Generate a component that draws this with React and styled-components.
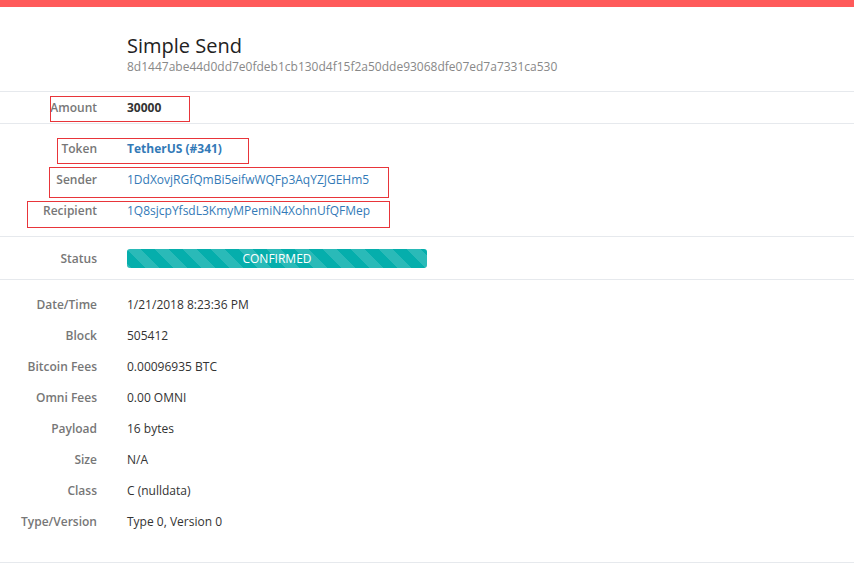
import React from "react";
import styled, { createGlobalStyle } from "styled-components";

const GlobalStyle = createGlobalStyle`
  body {
    margin: 0;
    background: #fff;
    font-family: "Open Sans", "Liberation Sans", sans-serif;
    font-size: 12px;
    color: #333;
  }
`;

const TOPBAR = styled.div`
  height: 7px;
  background: #ff5a5a;
`;

const HEADER = styled.div`
  padding: 25px 0 16px 127px;
  border-bottom: 1px solid #e6e9ed;
`;

const TITLE = styled.h1`
  margin: 0;
  font-size: 20px;
  font-weight: 400;
  line-height: 27px;
  color: #222;
`;

const HASH = styled.div`
  font-size: 12px;
  line-height: 16px;
  color: #888;
`;

const SECTION = styled.div`
  padding: ${(p) => p.pad || "0"};
  border-bottom: 1px solid #e6e9ed;
`;

const ROW = styled.div`
  position: relative;
  display: grid;
  grid-template-columns: 97px 1fr;
  column-gap: 30px;
  height: ${(p) => p.h || 31}px;
  align-items: center;
`;

const LABEL = styled.div`
  text-align: right;
  font-weight: 600;
  color: #777;
  white-space: nowrap;
`;

const VALUE = styled.div`
  color: ${(p) => (p.link ? "#337ab7" : "#333")};
  font-weight: ${(p) => (p.bold ? 700 : 400)};
  white-space: nowrap;
`;

const MARK = styled.div`
  position: absolute;
  border: 1px solid #e8353a;
  box-sizing: border-box;
  pointer-events: none;
`;

const STATUSBAR = styled.div`
  width: 300px;
  height: 19px;
  border-radius: 3px;
  background-color: #05aeac;
  background-image: linear-gradient(
    45deg,
    rgba(255, 255, 255, 0.15) 25%,
    transparent 25%,
    transparent 50%,
    rgba(255, 255, 255, 0.15) 50%,
    rgba(255, 255, 255, 0.15) 75%,
    transparent 75%,
    transparent
  );
  background-size: 28px 28px;
  color: #fff;
  text-align: center;
  line-height: 19px;
  font-size: 12px;
`;

const details = [
  ["Date/Time", "1/21/2018 8:23:36 PM"],
  ["Block", "505412"],
  ["Bitcoin Fees", "0.00096935 BTC"],
  ["Omni Fees", "0.00 OMNI"],
  ["Payload", "16 bytes"],
  ["Size", "N/A"],
  ["Class", "C (nulldata)"],
  ["Type/Version", "Type 0, Version 0"],
];

export default function App() {
  return (
    <>
      <GlobalStyle />
      <TOPBAR />
      <HEADER>
        <TITLE>Simple Send</TITLE>
        <HASH>8d1447abe44d0dd7e0fdeb1cb130d4f15f2a50dde93068dfe07ed7a7331ca530</HASH>
      </HEADER>
      <SECTION>
        <ROW>
          <LABEL>Amount</LABEL>
          <VALUE bold>30000</VALUE>
          <MARK style={{ left: 50, top: 4, width: 140, height: 26 }} />
        </ROW>
      </SECTION>
      <SECTION pad="9px 0 10px">
        <ROW>
          <LABEL>Token</LABEL>
          <VALUE link bold>TetherUS (#341)</VALUE>
          <MARK style={{ left: 57, top: 5, width: 192, height: 26 }} />
        </ROW>
        <ROW>
          <LABEL>Sender</LABEL>
          <VALUE link>1DdXovjRGfQmBi5eifwWQFp3AqYZJGEHm5</VALUE>
          <MARK style={{ left: 49, top: 3, width: 340, height: 31 }} />
        </ROW>
        <ROW>
          <LABEL>Recipient</LABEL>
          <VALUE link>1Q8sjcpYfsdL3KmyMPemiN4XohnUfQFMep</VALUE>
          <MARK style={{ left: 27, top: 6, width: 363, height: 27 }} />
        </ROW>
      </SECTION>
      <SECTION>
        <ROW h={42}>
          <LABEL>Status</LABEL>
          <STATUSBAR>CONFIRMED</STATUSBAR>
        </ROW>
      </SECTION>
      <SECTION pad="9px 0 25px">
        {details.map(([k, v]) => (
          <ROW key={k}>
            <LABEL>{k}</LABEL>
            <VALUE>{v}</VALUE>
          </ROW>
        ))}
      </SECTION>
    </>
  );
}
